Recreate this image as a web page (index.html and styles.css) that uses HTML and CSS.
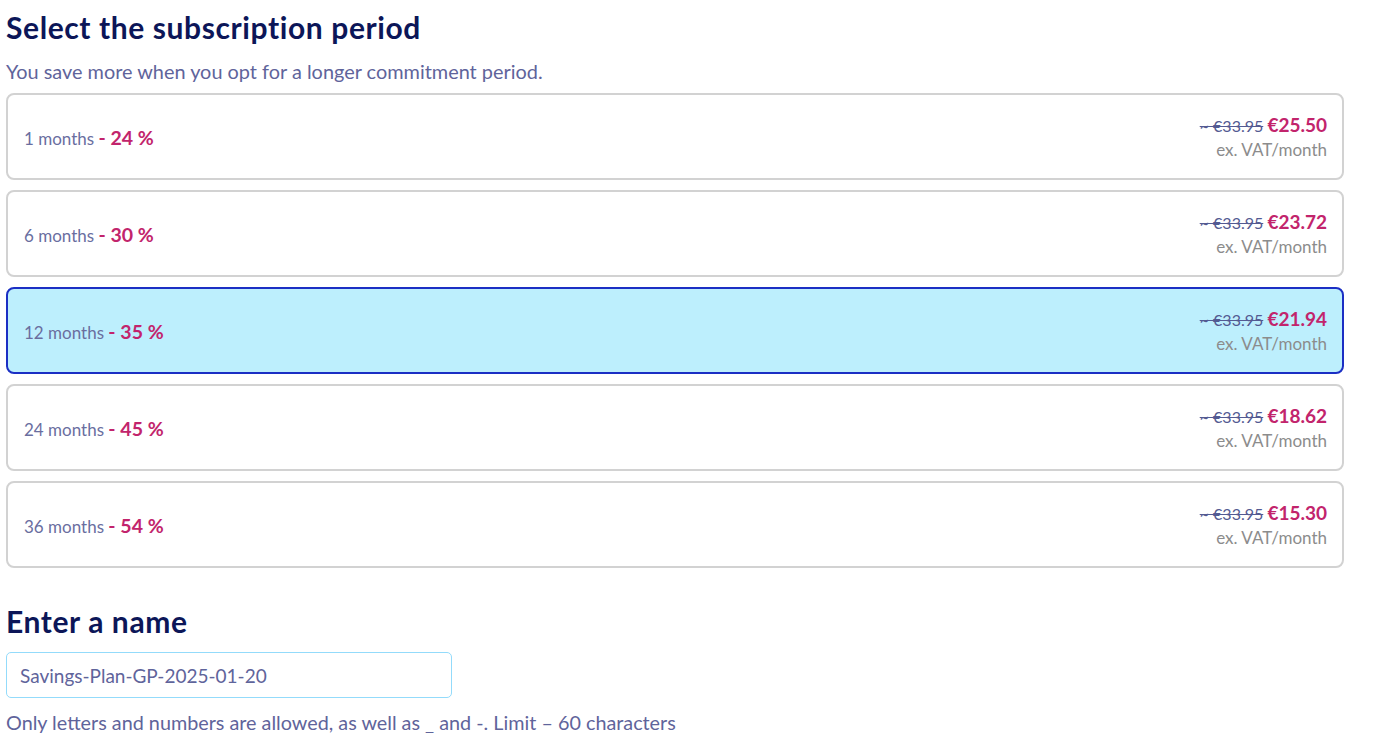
FILE: index.html
```html
<!DOCTYPE html>
<html lang="en">
<head>
<meta charset="utf-8">
<title>Select the subscription period</title>
<link rel="stylesheet" href="styles.css">
</head>
<body>
<main class="page">
  <section class="section">
    <h2 class="title">Select the subscription period</h2>
    <p class="subtitle">You save more when you opt for a longer commitment period.</p>
    <div class="options">
      <label class="option">
        <span class="period">1 months <b class="discount">- 24 %</b></span>
        <span class="price">
          <span class="price-line"><s class="old">~ €33.95</s> <strong class="new">€25.50</strong></span>
          <span class="vat">ex. VAT/month</span>
        </span>
      </label>
      <label class="option">
        <span class="period">6 months <b class="discount">- 30 %</b></span>
        <span class="price">
          <span class="price-line"><s class="old">~ €33.95</s> <strong class="new">€23.72</strong></span>
          <span class="vat">ex. VAT/month</span>
        </span>
      </label>
      <label class="option selected">
        <span class="period">12 months <b class="discount">- 35 %</b></span>
        <span class="price">
          <span class="price-line"><s class="old">~ €33.95</s> <strong class="new">€21.94</strong></span>
          <span class="vat">ex. VAT/month</span>
        </span>
      </label>
      <label class="option">
        <span class="period">24 months <b class="discount">- 45 %</b></span>
        <span class="price">
          <span class="price-line"><s class="old">~ €33.95</s> <strong class="new">€18.62</strong></span>
          <span class="vat">ex. VAT/month</span>
        </span>
      </label>
      <label class="option">
        <span class="period">36 months <b class="discount">- 54 %</b></span>
        <span class="price">
          <span class="price-line"><s class="old">~ €33.95</s> <strong class="new">€15.30</strong></span>
          <span class="vat">ex. VAT/month</span>
        </span>
      </label>
    </div>
  </section>
  <section class="section name-section">
    <h2 class="title">Enter a name</h2>
    <div class="field">Savings-Plan-GP-2025-01-20</div>
    <p class="help">Only letters and numbers are allowed, as well as _ and -. Limit – 60 characters</p>
  </section>
</main>
</body>
</html>
```

FILE: styles.css
```css
* { box-sizing: border-box; }
html, body { margin: 0; padding: 0; background: #ffffff; }
body {
  font-family: "Lato", "Open Sans", sans-serif;
  color: #5c6197;
}
.page {
  width: 1350px;
  padding: 0 6px;
}
.title {
  margin: 0;
  padding-top: 10px;
  font-size: 30px;
  line-height: 34px;
  font-weight: 700;
  letter-spacing: 0.6px;
  color: #0c1658;
}
.subtitle {
  margin: 16px 0 0;
  font-size: 19.9px;
  line-height: 22px;
  color: #5f649b;
}
.options {
  margin-top: 11px;
  display: flex;
  flex-direction: column;
  gap: 10px;
}
.option {
  height: 87px;
  display: flex;
  align-items: center;
  justify-content: space-between;
  padding: 2px 15px 0 16px;
  border: 2px solid #d2d2d2;
  border-radius: 8px;
  background: #ffffff;
}
.option.selected {
  background: #bdeffd;
  border-color: #1b2fc4;
}
.period {
  font-size: 17px;
  color: #6a6e9f;
}
.discount {
  font-weight: 700;
  font-size: 19.5px;
  color: #c2246c;
}
.price {
  display: flex;
  flex-direction: column;
  align-items: flex-end;
}
.price-line {
  line-height: 24px;
}
.old {
  font-size: 16px;
  color: #535a92;
}
.new {
  font-size: 19px;
  font-weight: 700;
  color: #c2246c;
}
.vat {
  font-size: 17px;
  line-height: 24px;
  color: #8c8c8c;
}
.name-section .title {
  padding-top: 36px;
}
.field {
  margin-top: 14px;
  width: 446px;
  height: 46px;
  border: 1.5px solid #93dbfb;
  border-radius: 5px;
  padding: 0 13px;
  display: flex;
  align-items: center;
  font-size: 19px;
  color: #5f649b;
}
.help {
  margin: 13px 0 0;
  font-size: 19.8px;
  line-height: 22px;
  color: #5f649b;
}
```
